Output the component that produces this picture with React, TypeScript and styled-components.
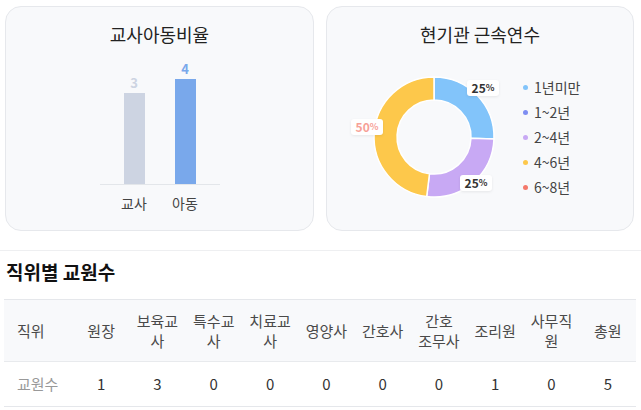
import React from "react";
import styled, { createGlobalStyle } from "styled-components";

const GlobalStyle = createGlobalStyle`
    body {
        margin: 0;
        background: #ffffff;
        font-family: "Noto Sans CJK KR", "Noto Sans", sans-serif;
        color: #333333;
    }
`;

interface BarDatum {
    label: string;
    value: number;
    height: number; // 차트 스케일 기준 높이(px)
    color: string;
}

interface Slice {
    label: string;
    color: string;
    from: number; // 12시 기준 시계방향 각도
    to: number;
}

interface PieLabel {
    text: string;
    color: string;
    left: number;
    top: number;
}

const bars: BarDatum[] = [
    { label: "교사", value: 3, height: 91, color: "#cdd4e2" },
    { label: "아동", value: 4, height: 105, color: "#79a8eb" },
];

const slices: Slice[] = [
    { label: "1년미만", color: "#82c4fa", from: 0, to: 92 },
    { label: "2~4년", color: "#c8a9f4", from: 92, to: 187 },
    { label: "4~6년", color: "#fdc84b", from: 187, to: 360 },
];

const pieLabels: PieLabel[] = [
    { text: "25", color: "#333333", left: 103, top: 13 },
    { text: "25", color: "#333333", left: 96, top: 108 },
    { text: "50", color: "#f7a197", left: -13, top: 52 },
];

const legend = [
    { label: "1년미만", color: "#82c4fa" },
    { label: "1~2년", color: "#7e8ef2" },
    { label: "2~4년", color: "#c8a9f4" },
    { label: "4~6년", color: "#fdc84b" },
    { label: "6~8년", color: "#f4796b" },
];

const positions = ["원장", "보육교사", "특수교사", "치료교사", "영양사", "간호사", "간호 조무사", "조리원", "사무직원", "총원"];
const counts = [1, 3, 0, 0, 0, 0, 0, 1, 0, 5];

const Page = styled.div`
    width: 641px;
`;

const CardRow = styled.div`
    display: grid;
    grid-template-columns: 309px 308px;
    gap: 12px;
    padding: 6px 7px 0 5px;
`;

const Card = styled.div`
    box-sizing: border-box;
    height: 225px;
    padding-top: 15px;
    border: 1px solid #e6e8ec;
    border-radius: 16px;
    background: #f8f9fb;
    display: flex;
    flex-direction: column;
    align-items: center;
`;

const CardTitle = styled.h2`
    margin: 0;
    font-size: 18px;
    line-height: 24px;
    font-weight: 400;
    color: #222222;
`;

const Plot = styled.div`
    margin-top: 19px;
    width: 120px;
    height: 119px;
    border-bottom: 1px solid #e3e6ea;
    display: flex;
    justify-content: center;
    align-items: flex-end;
    gap: 30px;
`;

const BarColumn = styled.div`
    width: 21px;
    display: flex;
    flex-direction: column;
    align-items: center;
`;

const BarValue = styled.span<{ $color: string }>`
    font-size: 13px;
    line-height: 16px;
    font-weight: 700;
    color: ${(p) => p.$color};
    margin-bottom: 2px;
`;

const Bar = styled.div<{ $color: string }>`
    width: 21px;
    background: ${(p) => p.$color};
`;

const AxisLabels = styled.div`
    margin-top: 9px;
    display: flex;
    justify-content: center;
    gap: 21px;
`;

const AxisLabel = styled.span`
    width: 30px;
    text-align: center;
    font-size: 14px;
    line-height: 18px;
    color: #444444;
`;

const DonutBody = styled.div`
    margin-top: 21px;
    align-self: stretch;
    padding-left: 37px;
    height: 140px;
    display: flex;
    align-items: center;
`;

const DonutWrap = styled.div`
    position: relative;
    width: 140px;
    height: 140px;
`;

const PieTag = styled.span<{ $color: string }>`
    position: absolute;
    box-sizing: border-box;
    width: 32px;
    height: 16px;
    border-radius: 3px;
    background: #ffffff;
    box-shadow: 0 1px 3px rgba(0, 0, 0, 0.08);
    display: flex;
    align-items: center;
    justify-content: center;
    font-size: 12px;
    font-weight: 700;
    line-height: 16px;
    color: ${(p) => p.$color};

    small {
        font-size: 9px;
        font-weight: 700;
    }
`;

const Legend = styled.ul`
    list-style: none;
    margin: 0 0 0 19px;
    padding: 0;
`;

const LegendItem = styled.li`
    height: 25px;
    display: flex;
    align-items: center;
    gap: 6px;
    font-size: 14px;
    color: #444444;
`;

const Dot = styled.span<{ $color: string }>`
    width: 5px;
    height: 5px;
    border-radius: 50%;
    background: ${(p) => p.$color};
`;

const Section = styled.section`
    margin-top: 19px;
    border-top: 1px solid #eeeff1;
    padding-top: 9px;
`;

const SectionTitle = styled.h3`
    margin: 0 0 15px 6px;
    font-size: 19px;
    line-height: 24px;
    font-weight: 700;
    color: #111111;
`;

const Table = styled.table`
    margin-left: 4px;
    width: 632px;
    table-layout: fixed;
    border-collapse: collapse;
    font-size: 15px;
    word-break: keep-all;
    overflow-wrap: anywhere;
`;

const HeadCell = styled.th<{ $first?: boolean }>`
    height: 61px;
    padding: 0 ${(p) => (p.$first ? "13px" : "6px")};
    text-align: ${(p) => (p.$first ? "left" : "center")};
    font-weight: 400;
    line-height: 20px;
    color: #4a4a4a;
    background: #f8f9fb;
    border-top: 1px solid #e5e7eb;
    border-bottom: 1px solid #e8eaed;
`;

const BodyCell = styled.td<{ $first?: boolean }>`
    height: 44px;
    padding: 0 ${(p) => (p.$first ? "13px" : "6px")};
    text-align: ${(p) => (p.$first ? "left" : "center")};
    line-height: 20px;
    color: ${(p) => (p.$first ? "#999999" : "#333333")};
    border-bottom: 1px solid #e5e7eb;
`;

const toPoint = (r: number, deg: number) => {
    const rad = (deg * Math.PI) / 180;
    return `${(70 + r * Math.sin(rad)).toFixed(2)} ${(70 - r * Math.cos(rad)).toFixed(2)}`;
};

const arcPath = (from: number, to: number, outer: number, inner: number) => {
    const large = to - from > 180 ? 1 : 0;
    return [
        `M ${toPoint(outer, from)}`,
        `A ${outer} ${outer} 0 ${large} 1 ${toPoint(outer, to)}`,
        `L ${toPoint(inner, to)}`,
        `A ${inner} ${inner} 0 ${large} 0 ${toPoint(inner, from)}`,
        "Z",
    ].join(" ");
};

const App: React.FC = () => {
    return (
        <>
            <GlobalStyle />
            <Page>
                <CardRow>
                    <Card>
                        <CardTitle>교사아동비율</CardTitle>
                        <Plot>
                            {bars.map((bar) => (
                                <BarColumn key={bar.label}>
                                    <BarValue $color={bar.color}>{bar.value}</BarValue>
                                    <Bar $color={bar.color} style={{ height: bar.height }} />
                                </BarColumn>
                            ))}
                        </Plot>
                        <AxisLabels>
                            {bars.map((bar) => (
                                <AxisLabel key={bar.label}>{bar.label}</AxisLabel>
                            ))}
                        </AxisLabels>
                    </Card>
                    <Card>
                        <CardTitle>현기관 근속연수</CardTitle>
                        <DonutBody>
                            <DonutWrap>
                                <svg width="140" height="140" viewBox="0 0 140 140">
                                    {slices.map((s) => (
                                        <path
                                            key={s.label}
                                            d={arcPath(s.from, s.to, 60, 37)}
                                            fill={s.color}
                                            stroke="#ffffff"
                                            strokeWidth="1.5"
                                        />
                                    ))}
                                </svg>
                                {pieLabels.map((l, i) => (
                                    <PieTag key={i} $color={l.color} style={{ left: l.left, top: l.top }}>
                                        {l.text}
                                        <small>%</small>
                                    </PieTag>
                                ))}
                            </DonutWrap>
                            <Legend>
                                {legend.map((item) => (
                                    <LegendItem key={item.label}>
                                        <Dot $color={item.color} />
                                        {item.label}
                                    </LegendItem>
                                ))}
                            </Legend>
                        </DonutBody>
                    </Card>
                </CardRow>
                <Section>
                    <SectionTitle>직위별 교원수</SectionTitle>
                    <Table>
                        <colgroup>
                            <col style={{ width: 69 }} />
                            {positions.map((p) => (
                                <col key={p} />
                            ))}
                        </colgroup>
                        <thead>
                            <tr>
                                <HeadCell $first>직위</HeadCell>
                                {positions.map((p) => (
                                    <HeadCell key={p}>{p}</HeadCell>
                                ))}
                            </tr>
                        </thead>
                        <tbody>
                            <tr>
                                <BodyCell $first>교원수</BodyCell>
                                {counts.map((c, i) => (
                                    <BodyCell key={i}>{c}</BodyCell>
                                ))}
                            </tr>
                        </tbody>
                    </Table>
                </Section>
            </Page>
        </>
    );
};

export default App;
